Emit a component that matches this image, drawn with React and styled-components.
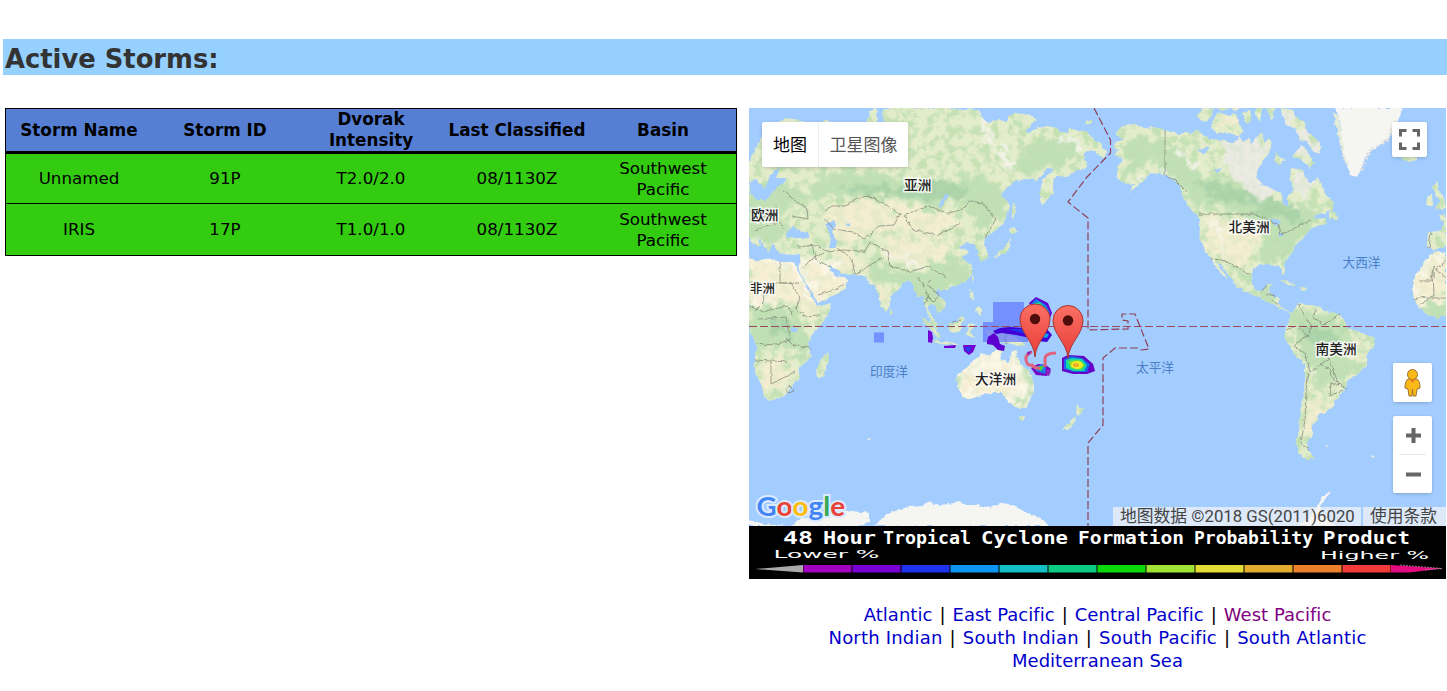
import React from "react";
import styled, { createGlobalStyle, css } from "styled-components";

const GlobalStyle = createGlobalStyle`
  body {
    margin: 0;
    background: #fff;
    color: #000;
    font-family: Verdana, "DejaVu Sans", sans-serif;
  }
`;

const Page = styled.main`
  padding: 39px 0 0 3px;
  height: 691px;
  box-sizing: border-box;
  overflow: hidden;
`;

const Banner = styled.h1`
  margin: 0 0 33px;
  padding: 2px 0 0 2px;
  height: 36px;
  box-sizing: border-box;
  background: #95d0ff;
  color: #333;
  font-size: 25.8px;
  font-weight: bold;
  line-height: 36px;
  white-space: nowrap;
`;

const Columns = styled.div`
  display: flex;
  align-items: flex-start;
  gap: 12px;
  padding-left: 2px;
`;

const StormTable = styled.div`
  width: 732px;
  box-sizing: border-box;
  border: 1px solid #000;
  font-size: 16.7px;
  line-height: 21px;
  text-align: center;
`;

const StormRow = styled.div`
  display: grid;
  grid-template-columns: repeat(5, minmax(0, 1fr));
  align-items: center;
  height: ${(p) => p.$height}px;
  box-sizing: border-box;
  ${(p) =>
    p.$head
      ? css`
          background: #567fd4;
          border-bottom: 2px solid #000;
          font-weight: bold;
          font-size: 16.8px;
        `
      : css`
          background: #33cc11;
          & + & {
            border-top: 1px solid #000;
          }
        `}
`;

const Cell = styled.span`
  padding: 0 4px;
  white-space: ${(p) => (p.$wrap ? "normal" : "nowrap")};
`;

const MapColumn = styled.section`
  width: 697px;
`;

const MapFrame = styled.div`
  position: relative;
  height: 418px;
  overflow: hidden;
  background: #a3ccff;
`;

const MapSvg = styled.svg`
  display: block;
`;

const ControlBox = styled.div`
  position: absolute;
  display: flex;
  align-items: center;
  justify-content: center;
  background: #fff;
  border-radius: 2px;
  box-shadow: 0 1px 4px -1px rgba(0, 0, 0, 0.3);
`;

const MapTypes = styled(ControlBox)`
  left: 13px;
  top: 14px;
  width: 146px;
  height: 45px;
  font: 17px "Noto Sans CJK SC", sans-serif;
`;

const MapType = styled.span`
  flex: ${(p) => (p.$active ? "0 0 56px" : "1")};
  height: 45px;
  line-height: 44px;
  text-align: center;
  color: ${(p) => (p.$active ? "#000" : "#565656")};
  box-sizing: border-box;
  border-left: ${(p) => (p.$active ? "0" : "1px solid #ededed")};
`;

const FullScreen = styled(ControlBox)`
  left: 643px;
  top: 14px;
  width: 35px;
  height: 35px;
`;

const Pegman = styled(ControlBox)`
  left: 644px;
  top: 255px;
  width: 39px;
  height: 39px;
`;

const Zoom = styled(ControlBox)`
  left: 644px;
  top: 308px;
  width: 39px;
  height: 77px;
  flex-direction: column;
`;

const ZoomButton = styled.span`
  flex: 1;
  display: flex;
  align-items: center;
  justify-content: center;
  padding-left: 1px;
`;

const ZoomDivider = styled.span`
  width: 27px;
  height: 1px;
  background: #e6e6e6;
`;

const Attribution = styled.div`
  position: absolute;
  right: 0;
  bottom: 0;
  display: flex;
  gap: 2px;
  height: 19px;
  font: 16.8px Roboto, "Noto Sans CJK SC", sans-serif;
  line-height: 19px;
  color: #444;
  white-space: nowrap;
`;

const Credit = styled.span`
  width: ${(p) => p.$width}px;
  box-sizing: border-box;
  padding-left: 7px;
  height: 19px;
  background: rgba(245, 245, 245, 0.7);
`;

const Links = styled.nav`
  padding-top: 24px;
  font-size: 18px;
  line-height: 23px;
  text-align: center;
  white-space: nowrap;
`;

const LinkRow = styled.div`
  display: flex;
  justify-content: center;
  gap: 7px;
  letter-spacing: ${(p) => p.$tracking}px;
`;

const RegionLink = styled.a`
  color: ${(p) => (p.$visited ? "#800080" : "#0000cc")};
  text-decoration: none;
`;

const storms = [
  ["Unnamed", "91P", "T2.0/2.0", "08/1130Z", "Southwest Pacific"],
  ["IRIS", "17P", "T1.0/1.0", "08/1130Z", "Southwest Pacific"],
];

const headings = ["Storm Name", "Storm ID", "Dvorak Intensity", "Last Classified", "Basin"];

const regions = [
  { tracking: 0.03, names: ["Atlantic", "East Pacific", "Central Pacific", "West Pacific"] },
  { tracking: 0.2, names: ["North Indian", "South Indian", "South Pacific", "South Atlantic"] },
  { tracking: 0, names: ["Mediterranean Sea"] },
];

// Coast lines, in the coordinate space of the map's viewBox.
const land = [
  // Eurasia
  "M749 162 755 150 762 137 770 128 785 118 800 120 815 128 826 120 838 124 848 128 858 122 866 124 870 112 876 108 878 120 874 126 884 122 882 112 888 108 950 108 962 110 972 108 980 112 984 120 988 123 998 120 1007 122 1008 117 1015 113 1030 115 1037 120 1031 125 1025 132 1029 133 1038 128 1047 126 1057 128 1060 132 1067 133 1071 129 1077 130 1085 131 1090 135 1094 141 1100 143 1104 149 1108 153 1102 158 1097 153 1090 150 1082 155 1087 162 1086 168 1075 171 1067 177 1058 176 1053 180 1053 192 1047 200 1042 207 1040 199 1040 192 1043 180 1049 174 1055 169 1047 168 1043 175 1037 180 1025 179 1013 182 1006 189 1000 195 1007 201 1010 206 1007 216 1003 224 993 232 985 238 984 244 987 250 987 259 980 262 978 252 974 244 966 243 958 248 969 251 962 258 972 266 972 274 966 281 957 285 945 289 937 290 935 294 942 299 946 304 945 309 938 313 935 306 930 303 928 309 933 317 937 323 937 329 931 324 928 315 926 308 924 297 918 297 914 287 909 280 903 282 898 290 891 295 890 304 886 312 881 306 878 294 875 285 869 284 866 276 852 275 841 273 834 268 829 264 831 271 837 278 842 276 848 280 845 289 836 294 826 300 817 303 813 293 804 280 798 268 801 260 800 254 793 255 782 254 776 250 773 243 769 252 765 247 758 238 760 247 754 244 749 238Z",
  // Africa, east part
  "M749 257 757 262 766 258 780 262 794 262 797 270 805 284 812 297 817 307 831 303 829 314 820 326 812 335 808 343 811 356 805 363 798 368 800 377 793 384 789 392 780 398 768 401 764 397 762 386 756 374 754 363 757 348 753 336 749 330Z",
  "M828 352 829 361 823 376 818 379 816 372 820 361Z",
  // North America
  "M1115 143 1124 139 1115 134 1121 127 1133 123 1144 128 1155 127 1165 130 1178 134 1187 132 1192 134 1197 129 1204 136 1210 139 1222 140 1233 144 1240 137 1243 143 1249 137 1251 145 1257 137 1262 132 1265 145 1268 138 1271 141 1269 153 1264 160 1257 170 1257 177 1262 185 1274 190 1282 195 1283 205 1288 206 1288 196 1293 190 1290 178 1291 168 1303 170 1304 176 1309 183 1314 181 1317 177 1322 185 1324 193 1333 202 1333 210 1325 213 1316 214 1312 220 1325 218 1327 222 1318 226 1311 229 1303 238 1294 247 1292 254 1284 262 1285 270 1284 275 1279 267 1268 264 1259 265 1253 269 1251 280 1255 291 1264 290 1267 284 1272 284 1268 293 1278 298 1280 307 1287 311 1292 312 1300 303 1310 306 1319 306 1325 312 1338 314 1345 320 1347 329 1360 332 1375 338 1374 347 1367 355 1366 366 1359 374 1348 380 1346 388 1337 398 1333 407 1328 411 1318 415 1317 421 1311 426 1313 434 1308 441 1307 449 1315 458 1307 460 1300 454 1296 444 1299 431 1300 414 1303 398 1305 382 1305 364 1295 355 1289 345 1284 337 1287 324 1292 314 1283 310 1273 304 1260 298 1250 294 1237 287 1231 278 1222 267 1215 260 1222 270 1228 279 1224 276 1216 268 1211 258 1205 250 1200 240 1199 218 1190 208 1182 196 1180 185 1170 177 1160 174 1150 173 1145 180 1137 186 1130 192 1119 198 1131 191 1134 184 1124 183 1117 177 1117 167 1124 160 1114 155 1119 150 1113 148Z",
  // Arctic islands
  "M1214 108 1209 119 1202 122 1197 116 1203 108Z",
  "M1218 112 1228 116 1236 114 1239 125 1244 130 1239 136 1229 133 1217 134 1211 125Z",
  "M1242 113 1250 110 1252 121 1246 123Z M1256 108 1262 108 1260 122 1255 115Z M1267 108 1275 108 1272 121Z",
  "M1280 108 1293 110 1295 117 1304 121 1307 132 1314 137 1321 145 1320 153 1312 150 1307 141 1299 139 1295 128 1286 125Z",
  "M1301 145 1308 153 1314 163 1310 168 1299 158 1292 157Z M1276 153 1285 160 1281 164 1274 162Z",
  "M1218 108h12l-8 3zM1232 108h7l-4 3z",
  // Europe and Africa, west part
  "M1433 186 1438 182 1438 190 1444 196 1446 208 1435 210 1440 201 1435 195Z M1426 205 1427 198 1432 194 1433 205Z",
  "M1446 214 1439 216 1444 224 1440 231 1428 232 1427 246 1433 250 1446 246Z",
  "M1446 253 1434 252 1426 260 1419 270 1413 281 1413 294 1418 307 1428 315 1437 318 1446 315Z",
  "M1401 152 1415 154 1417 159 1409 162 1401 159Z M1330 211 1337 214 1338 220 1330 219Z",
  // Australia and New Zealand
  "M995 350 1003 350 1000 358 1009 363 1012 352 1015 350 1020 364 1028 371 1034 381 1034 391 1029 401 1026 408 1016 408 1008 401 1001 393 992 393 981 395 970 399 962 398 958 386 957 375 965 369 972 363 982 353 989 356Z",
  "M1018 416 1025 416 1023 421 1020 421Z M1077 403 1079 408 1084 409 1079 416 1076 413Z M1074 417 1076 420 1068 430 1062 430Z",
  // Islands of the western Pacific
  "M920 317 927 321 939 333 940 339 935 335Z M931 339 942 342 958 343 955 345 940 344Z",
  "M948 324 953 324 962 316 965 319 961 324 961 331 954 333 949 330Z M968 325 976 324 970 330 974 338 967 335Z",
  "M985 331 994 330 1006 333 1015 337 1026 345 1018 346 1008 343 1000 342 990 337Z",
  "M969 289 973 293 976 301 971 298Z M977 307 981 308 981 315 975 311Z M972 275 974 278 972 283Z",
  "M1010 230 1013 227 1018 232 1012 234Z M1011 237 1010 248 1004 254 993 258 999 252 1005 248Z M1013 202 1016 211 1012 221 1012 212Z M890 308 893 313 890 315Z",
  "M1280 280 1287 281 1297 286 1289 285Z M1299 287 1308 288 1304 291Z M945 287h4v3h-4zM1086 121l6-1v4h-6z",
];

const ice = [
  "M1335 108 1340 119 1341 132 1341 146 1346 164 1351 175 1357 177 1361 170 1364 160 1371 150 1383 143 1392 134 1398 120 1403 108Z",
  "M749 526 749 520 765 524 791 526 799 519 813 517 826 512 845 510 869 513 869 522 858 526Z",
  "M875 526 880 520 886 515 896 510 909 507 921 506 929 502 939 505 950 504 958 502 967 505 978 505 990 508 1000 503 1010 504 1020 509 1031 515 1041 518 1050 526Z",
  "M1331 491 1323 496 1317 507 1308 519 1298 526 1335 526 1322 514 1320 506Z",
];

const forest = [
  "M749 193Q770 178 790 187T830 172Q870 168 909 180T973 173L1002 188 1008 210 983 237 960 200 935 214 895 192 860 200 820 197 790 207 749 230Z",
  "M1128 142Q1150 133 1180 150L1201 176Q1235 180 1249 193L1282 207 1326 207 1306 235 1285 260 1260 265 1265 235 1248 214 1216 207 1203 202 1195 212 1185 192 1150 160 1125 178Z",
  "M1288 313Q1325 306 1344 328L1350 357 1365 364 1348 379 1317 384 1300 350Z",
  "M749 307Q784 300 800 320L809 340 807 357 780 346 756 352 749 330Z M866 260 886 268 902 272 923 271 965 256 972 275 939 294 947 310 933 318 916 291 897 285 873 281Z",
  "M1017 351 1035 381 1026 407 1014 406 1026 394 1028 379Z M1247 270 1228 260 1253 290 1267 285 1278 308 1248 294Z M1302 390 1303 420 1298 448 1301 455Z",
  "M1030 140 1070 138 1082 150 1060 165 1030 175 1010 168Z M749 226 775 222 795 232 770 245 749 236Z M1414 303 1446 303 1446 318H1420Z",
];

const desert = [
  "M824 210 861 196 895 207 950 212 960 227 923 238 894 227 862 240 835 236Z M749 263 790 267 810 299 819 305 813 321 797 304 749 297Z M804 257 833 278 847 282 817 302Z M830 246 865 258 870 273 838 268Z",
  "M888 235 938 242 958 252 920 267 886 258Z M962 372 1007 368 1025 385 1000 393 963 393Z",
  "M1203 216 1246 216 1261 230 1248 265 1218 259 1204 241Z M1307 402 1330 400 1312 430 1305 442Z M1427 262 1446 254 1446 299 1414 300Z",
  "M1213 111h24v20h-20z M872 284l18 8-2 18-10-12z M762 362 785 355 790 380 765 395Z M1325 340 1365 340 1355 365 1335 365Z",
];

const borders = [
  "M1165 130V175L1175 180 1187 192M1199 214H1255L1268 220 1279 225 1281 235 1299 226 1311 220M1211 259 1222 260 1235 266 1250 275M1260 294l6-8m0 8 9 2m-3 4 8 6",
  "M824 212 832 206 845 206 857 198 868 196 883 203 900 214 894 225 879 226 864 239 853 232 834 229 824 218M904 215 929 206 948 213 961 210 970 201 982 203 996 219 985 238M904 215 913 230 939 235 960 223",
  "M783 190 793 199 807 209 808 219 792 216M749 211 763 218 777 207M755 230 779 222 785 230M771 211 775 225M798 247 815 245 828 252 842 250 865 251 870 242 887 251 890 266 910 272 928 266 946 278M812 245 816 260 831 267M837 248 852 259 855 275 870 265 884 257",
  "M780 262V283H799M749 283H791L800 298 796 309 805 316 820 315M762 282 764 302 755 311M749 306 763 312 787 306 794 316M758 319 786 317 790 340 772 345 756 343M785 337 794 345 811 348M754 360 788 362M771 362V384L795 372M786 389l4-3 4 5-5 2-3-4M803 268 810 260 824 253M818 295 834 290 845 283",
  "M918 277 923 285 928 297 933 302 939 295 927 284 932 278M928 297 925 305M952 322 961 320M1006 333V344",
  "M1299 304 1305 317 1311 325 1309 335 1303 338 1294 346 1306 354 1310 372 1320 364 1329 369 1333 379 1347 389M1286 330 1296 326 1309 337M1316 309 1313 318 1323 324 1333 320 1339 314M1309 373 1306 390 1305 420 1301 443 1309 450M1319 365 1329 359 1333 369 1339 386 1331 383 1330 396 1343 390",
  "M1436 269 1446 261M1420 281 1431 281 1433 266 1446 278M1433 270 1434 296 1413 299M1418 306 1430 298 1446 298M1431 232 1429 248",
];

const lakes = [
  "M826 224 833 221 836 226 832 232 837 242 836 248 829 248 831 239Z M786 234 793 225 799 231 808 233 810 238 787 238Z",
  "M749 182 755 179 765 189 770 176 780 166 776 178 788 178 772 193 766 200 757 200 751 194Z M938 207 946 193 949 194 941 207Z",
  "M1197 150 1210 147 1205 154Z M1213 171 1223 167 1218 173Z M1269 218 1281 221 1276 226Z M1279 230 1283 235 1280 237Z M791 328h6v4h-6z M846 223h4v3h-4z",
];

const dateLine =
  "M1094 108 1110.500 140V153L1087 177 1068 202 1088 218V330L1128 329V321L1122 320V314H1135L1149 349 1141 350 1138 348H1115L1103 358V425L1088 443V526";

const seas = [
  ["印度洋", 870, 376],
  ["太平洋", 1136, 372],
  ["大西洋", 1342.5, 267],
];

const continents = [
  ["亚洲", 904, 190, 13.7],
  ["欧洲", 751, 220, 13.7],
  ["非洲", 750, 293, 12.4],
  ["大洋洲", 975, 383.5, 13.7],
  ["北美洲", 1228.5, 232, 13.7],
  ["南美洲", 1315.5, 354, 13.7],
];

function Pin({ x, y }) {
  return (
    <g transform={`translate(${x} ${y})`}>
      <path
        d="M0 38C-1 22-15 14-15 0A15 15 0 0 1 15 0C15 14 1 22 0 38Z"
        fill="url(#pin)"
        stroke="#a83532"
        strokeWidth="1"
      />
      <circle r="5.2" fill="#4f0d0b" />
    </g>
  );
}

function WorldMap() {
  return (
    <MapSvg width="697" height="418" viewBox="749 108 697 418">
      <defs>
        <linearGradient id="pin" x1="0" y1="0" x2="0" y2="1">
          <stop offset="0" stopColor="#fb7064" />
          <stop offset="1" stopColor="#e83c37" />
        </linearGradient>
        <filter id="coast" x="-5%" y="-5%" width="110%" height="110%">
          <feTurbulence type="fractalNoise" baseFrequency="0.22" numOctaves="2" seed="4" result="n" />
          <feDisplacementMap in="SourceGraphic" in2="n" scale="4" xChannelSelector="R" yChannelSelector="G" />
        </filter>
        <filter id="terrain" x="-5%" y="-5%" width="110%" height="110%">
          <feTurbulence type="fractalNoise" baseFrequency="0.09" numOctaves="4" seed="8" result="n" />
          <feDisplacementMap in="SourceGraphic" in2="n" scale="26" xChannelSelector="R" yChannelSelector="G" />
          <feGaussianBlur stdDeviation="0.8" />
        </filter>
        <filter id="relief" x="0" y="0" width="100%" height="100%" colorInterpolationFilters="sRGB">
          <feTurbulence type="fractalNoise" baseFrequency="0.11" numOctaves="4" seed="15" />
          <feColorMatrix values="0 0 0 0 0.74  0 0 0 0 0.87  0 0 0 0 0.68  5 0 0 0 -2.3" />
        </filter>
        <filter id="soft">
          <feGaussianBlur stdDeviation="0.5" />
        </filter>
        <clipPath id="landClip">
          {land.map((d) => (
            <path key={d} d={d} />
          ))}
        </clipPath>
      </defs>

      <g filter="url(#coast)">
        <g fill="#e4edcb">
          {land.map((d) => (
            <path key={d} d={d} />
          ))}
        </g>
        <g clipPath="url(#landClip)">
          <rect x="749" y="108" width="697" height="418" filter="url(#relief)" opacity="0.7" />
          <g filter="url(#terrain)">
            <path d="M749 258H832L848 282 820 304 749 302ZM957 350H1036V409H957ZM1410 250H1446V304H1410Z" fill="#fcf6e6" />
            <path d="M1222 142 1268 132 1257 178 1278 191 1260 198 1232 178Z M1290 168 1319 178 1307 196 1290 190Z M1280 108 1323 145 1307 162 1278 125Z" fill="#ebeae3" />
            {desert.map((d) => (
              <path key={d} d={d} fill="#f5eed2" opacity="0.9" />
            ))}
            {forest.map((d) => (
              <path key={d} d={d} fill="#bfdfb4" opacity="0.92" />
            ))}
            <path
              d="M823 186 890 187 945 180 975 188 958 200 916 198 870 195ZM1198 179 1247 192 1303 211 1302 222 1272 219 1242 202 1213 201ZM1300 325 1343 331 1333 345 1305 340ZM767 320 794 322 786 337 768 331Z"
              fill="#abd3aa"
            />
          </g>
          <rect x="749" y="108" width="697" height="418" filter="url(#relief)" opacity="0.2" />
          <path
            d="M985 112 986 131 1003 160 1014 170M1137 183 1150 170 1173 174M1177 155 1192 163 1197 172M887 255 922 265M1209 222 1220 237 1227 255M1063 140l18 4"
            fill="none"
            stroke="#f7f5ef"
            strokeWidth="3.500"
            filter="url(#terrain)"
          />
        </g>
        <g fill="#a3ccff">
          {lakes.map((d) => (
            <path key={d} d={d} />
          ))}
        </g>
        <g fill="#f5f5f2">
          {ice.map((d) => (
            <path key={d} d={d} />
          ))}
          <path d="M1333 112l6 4 5 38 6 16-5-8-5-17zM1324 445l5 1-3 2zM1370 454l4 3-2 1zM866 438h4v2h-4z" fill="#e4ebd9" />
        </g>
        <path d="M1361 170 1370 150 1386 141 1397 121" fill="none" stroke="#e3e3e0" strokeWidth="3" strokeDasharray="2 2" />
      </g>
      <g fill="none" stroke="#777c70" strokeWidth="0.8" opacity="0.85" filter="url(#coast)">
        {borders.map((d) => (
          <path key={d} d={d} />
        ))}
      </g>

      <g fill="#6478ff" opacity="0.72">
        <path d="M993 302H1024V322H1028V342H983V322H993ZM874 332.500H884V342.500H874Z" />
      </g>
      <g filter="url(#soft)">
        <path d="M928 330 932 332 933 338 932 343 928 342ZM944 346 956 345 955 348 944 348ZM963 345 976 345 973 352 969 355 964 351Z" fill="#7200d2" />
        <path d="M965 347h6l-1 5-4-1z" fill="#273ee8" />
        <path d="M987 342 988 337 994 333 998 337 1000 344 1005 346 1004 351 998 350 993 345 987 344Z" fill="#5d00cf" />
        <path d="M993 331 1000 328 1010 327 1022 328 1030 326 1046 328 1052 335 1047 342 1038 341 1030 338 1016 335 1002 333 996 334Z" fill="#4200d6" />
        <path d="M1008 329 1022 329 1033 330 1047 333 1046 338 1031 335 1018 332Z" fill="#1d35ee" />
        <path d="M1043 333l6 1-2 4-5-1z" fill="#09a6ed" />
        <path d="M1029 303 1036 297 1048 303 1052 313 1050 318 1033 310Z" fill="#6400d2" />
        <path d="M1031 304 1036 299 1046 305 1050 313 1045 314 1038 304Z" fill="#0a83f0" />
        <path d="M1034 303 1040 302 1048 311 1043 311Z" fill="#22cf9b" />
        <path d="M1031 368 1038 364 1046 365 1051 369 1047 376 1036 375Z" fill="#7500c8" />
        <path d="M1034 368 1042 364 1046 368 1045 374 1036 371Z" fill="#1a7ce9" />
        <path d="M1034 367 1044 366 1041 371Z" fill="#54d52b" />
        <path d="M1032 352q-7 2-6 8t6 5q3 4 8 3M1045 367V359Q1045 353 1056 353" fill="none" stroke="#e0647d" strokeWidth="3" />
        <path d="M1027 352l5-1-4 5zM1047 369l4 2-2 5-4-2z" fill="#8b23bd" />
        <path d="M1062 358 1068 355 1084 356 1093 364 1095 371 1087 374 1073 374 1062 371Z" fill="#6800c8" />
        <path d="M1064 359 1071 356 1082 358 1090 364 1087 372 1074 372 1064 369Z" fill="#1269ec" />
        <path d="M1066 360 1072 358 1082 359 1087 365 1084 371 1073 371 1066 368Z" fill="#19d7a1" />
        <path d="M1068 361 1079 360 1085 365 1081 370 1071 368Z" fill="#78e12d" />
        <ellipse cx="1077" cy="365" rx="6" ry="4" fill="#ecec24" />
        <ellipse cx="1076" cy="365" rx="3" ry="2" fill="#f2aa29" />
      </g>

      <path d="M749 326.500H1446" stroke="#9b4a5d" strokeWidth="1.200" strokeDasharray="8 3" />
      <path d={dateLine} fill="none" stroke="#8f4054" strokeWidth="1.200" strokeDasharray="8 3" />

      <g fontFamily='"Noto Sans CJK SC", sans-serif'>
        <g fontSize="12.700" fill="#4b7fc4">
          {seas.map(([name, x, y]) => (
            <text key={name} x={x} y={y}>
              {name}
            </text>
          ))}
        </g>
        <g fontWeight="500" fill="#222" stroke="#fff" strokeOpacity="0.8" strokeWidth="3" paintOrder="stroke">
          {continents.map(([name, x, y, size]) => (
            <text key={name} x={x} y={y} fontSize={size}>
              {name}
            </text>
          ))}
        </g>
      </g>
      <Pin x={1035} y={319} />
      <Pin x={1068} y={320.5} />

      <text
        x="756.500"
        y="516"
        fontFamily="Lato, sans-serif"
        fontSize="27.500"
        fontWeight="bold"
        textLength="88.500"
        lengthAdjust="spacingAndGlyphs"
        stroke="#dceaff"
        strokeWidth="4"
        paintOrder="stroke"
      >
        <tspan fill="#4285f4">G</tspan>
        <tspan fill="#ea4335">o</tspan>
        <tspan fill="#fbbc05">o</tspan>
        <tspan fill="#4285f4">g</tspan>
        <tspan fill="#34a853">l</tspan>
        <tspan fill="#ea4335">e</tspan>
      </text>
    </MapSvg>
  );
}

const legendTitle = [
  ["48", 783, 30],
  ["Hour", 823, 53],
  ["Tropical", 883, 88],
  ["Cyclone", 981, 87],
  ["Formation", 1078, 106],
  ["Probability", 1194, 119],
  ["Product", 1323, 87],
];

const scale = [
  "#a100c0", "#7800d4", "#1d33ef", "#0c95f3", "#13bfc5", "#0bcb84",
  "#0bd80b", "#a0e335", "#e3dc35", "#e3ac30", "#ee802b", "#f23a3b",
];

function Legend() {
  return (
    <MapSvg width="697" height="53" viewBox="749 526 697 53">
      <rect x="749" y="526" width="697" height="53" fill="#000" />
      <g fill="#fff">
        <g fontFamily='"DejaVu Sans Mono", monospace' fontWeight="bold" fontSize="17">
          {legendTitle.map(([word, x, width]) => (
            <text key={word} x={x} y="543.500" textLength={width} lengthAdjust="spacingAndGlyphs">
              {word}
            </text>
          ))}
        </g>
        <g fontFamily='"DejaVu Sans", sans-serif' fontSize="10">
          <text x="773.500" y="558" textLength="106" lengthAdjust="spacingAndGlyphs">
            Lower %
          </text>
          <text x="1320" y="558.500" textLength="109" lengthAdjust="spacingAndGlyphs">
            Higher %
          </text>
        </g>
      </g>
      <path d="M755 569 803 565V572.500Z" fill="#aaa" />
      {scale.map((color, i) => (
        <rect key={color} x={803.5 + i * 49} y="565" width="48" height="7.500" fill={color} />
      ))}
      <path d="M1391 565 1441 568.500 1410 572.500H1391Z" fill="#e30b80" />
      <path d="M1400 565 1442 568.500 1425 570" fill="none" stroke="#d9a0c0" strokeWidth="0.700" strokeDasharray="2 1" />
    </MapSvg>
  );
}

function Table() {
  return (
    <StormTable>
      <StormRow $head $height={44}>
        {headings.map((h) => (
          <Cell key={h} $wrap={h === "Dvorak Intensity"}>
            {h}
          </Cell>
        ))}
      </StormRow>
      {storms.map((row, r) => (
        <StormRow key={row[0]} $height={r ? 52 : 50}>
          {row.map((value, i) => (
            <Cell key={i} $wrap={i === 4}>
              {value}
            </Cell>
          ))}
        </StormRow>
      ))}
    </StormTable>
  );
}

export default function App() {
  return (
    <>
      <GlobalStyle />
      <Page>
        <Banner>Active Storms:</Banner>
        <Columns>
          <Table />
          <MapColumn>
            <MapFrame>
              <WorldMap />
              <MapTypes>
                <MapType $active>地图</MapType>
                <MapType>卫星图像</MapType>
              </MapTypes>
              <FullScreen>
                <svg width="21" height="21" viewBox="0 0 21 21" fill="none" stroke="#666" strokeWidth="3">
                  <path d="M1.500 7.500V1.500H7.500M13.500 1.500H19.500V7.500M19.500 13.500V19.500H13.500M7.500 19.500H1.500V13.500" />
                </svg>
              </FullScreen>
              <Pegman>
                <svg width="17" height="28" viewBox="0 0 17 28" stroke="#9a7435" strokeWidth="1">
                  <path d="M4 10Q1 12 1 19L4 20 5 27H8L8.500 20 9 27H12L13 20 16 19Q16 12 13 10Z" fill="#fbb917" />
                  <circle cx="8.500" cy="5.500" r="5" fill="#fbb917" />
                  <path d="M5.500 10 8.500 14 11.500 10Z" fill="#e57a25" stroke="none" />
                </svg>
              </Pegman>
              <Zoom>
                <ZoomButton>
                  <svg width="15" height="15" viewBox="0 0 15 15" stroke="#666" strokeWidth="4">
                    <path d="M7.500 0V15M0 7.500H15" />
                  </svg>
                </ZoomButton>
                <ZoomDivider />
                <ZoomButton>
                  <svg width="15" height="15" viewBox="0 0 15 15" stroke="#666" strokeWidth="4">
                    <path d="M0 7.500H15" />
                  </svg>
                </ZoomButton>
              </Zoom>
              <Attribution>
                <Credit $width={248}>地图数据 ©2018 GS(2011)6020</Credit>
                <Credit $width={83}>使用条款</Credit>
              </Attribution>
            </MapFrame>
            <Legend />
            <Links>
              {regions.map(({ names, tracking }) => (
                <LinkRow key={names[0]} $tracking={tracking}>
                  {names.map((name, i) => (
                    <React.Fragment key={name}>
                      {i > 0 && <span>|</span>}
                      <RegionLink $visited={name === "West Pacific"}>{name}</RegionLink>
                    </React.Fragment>
                  ))}
                </LinkRow>
              ))}
            </Links>
          </MapColumn>
        </Columns>
      </Page>
    </>
  );
}
